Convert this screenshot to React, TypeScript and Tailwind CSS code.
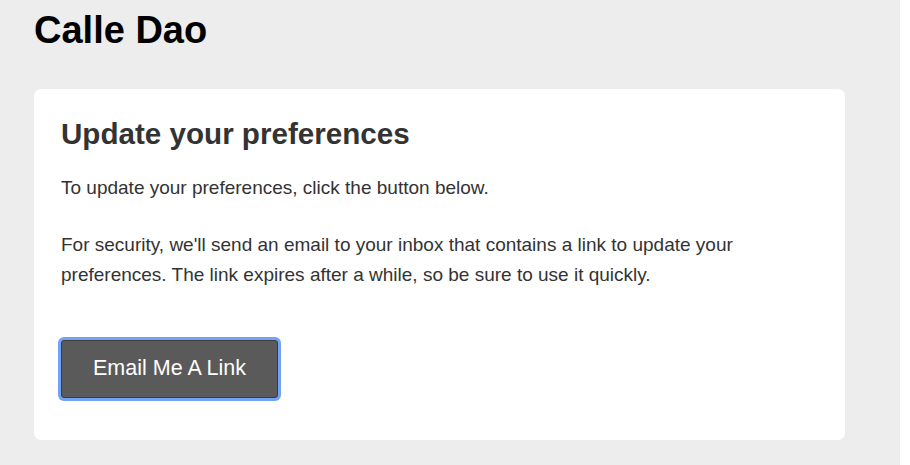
import React from 'react';

export default function App() {
  return (
    <div className="flex w-[910px] h-[465px] bg-white overflow-hidden" style={{ fontFamily: '"Liberation Sans", Arial, sans-serif' }}>
      <main className="w-[900px] h-full bg-[#ededed] px-[34px] pt-[11px]">
        <h1 className="text-[38px] leading-none font-bold text-black">Calle Dao</h1>

        <section className="mt-[40px] w-[811px] h-[351px] bg-white rounded-[7px] px-[27px] pt-[30px]">
          <h2 className="text-[29.6px] leading-none font-bold text-[#333333]">Update your preferences</h2>
          <div className="mt-[24px] text-[19px] leading-[30px] text-[#333333]">
            <p>To update your preferences, click the button below.</p>
            <p className="mt-[27px]">
              For security, we'll send an email to your inbox that contains a link to update your preferences. The link expires after a while, so be sure to use it quickly.
            </p>
          </div>
          <button
            type="button"
            className="mt-[50px] w-[217px] h-[58px] rounded-[3px] border border-[#3c3c3c] bg-[#5a5a5a] text-white text-[21.5px] shadow-[0_0_0_3px_#72a3f7]"
          >
            Email Me A Link
          </button>
        </section>
      </main>
      <div className="w-[10px] h-full bg-white" />
    </div>
  );
}
